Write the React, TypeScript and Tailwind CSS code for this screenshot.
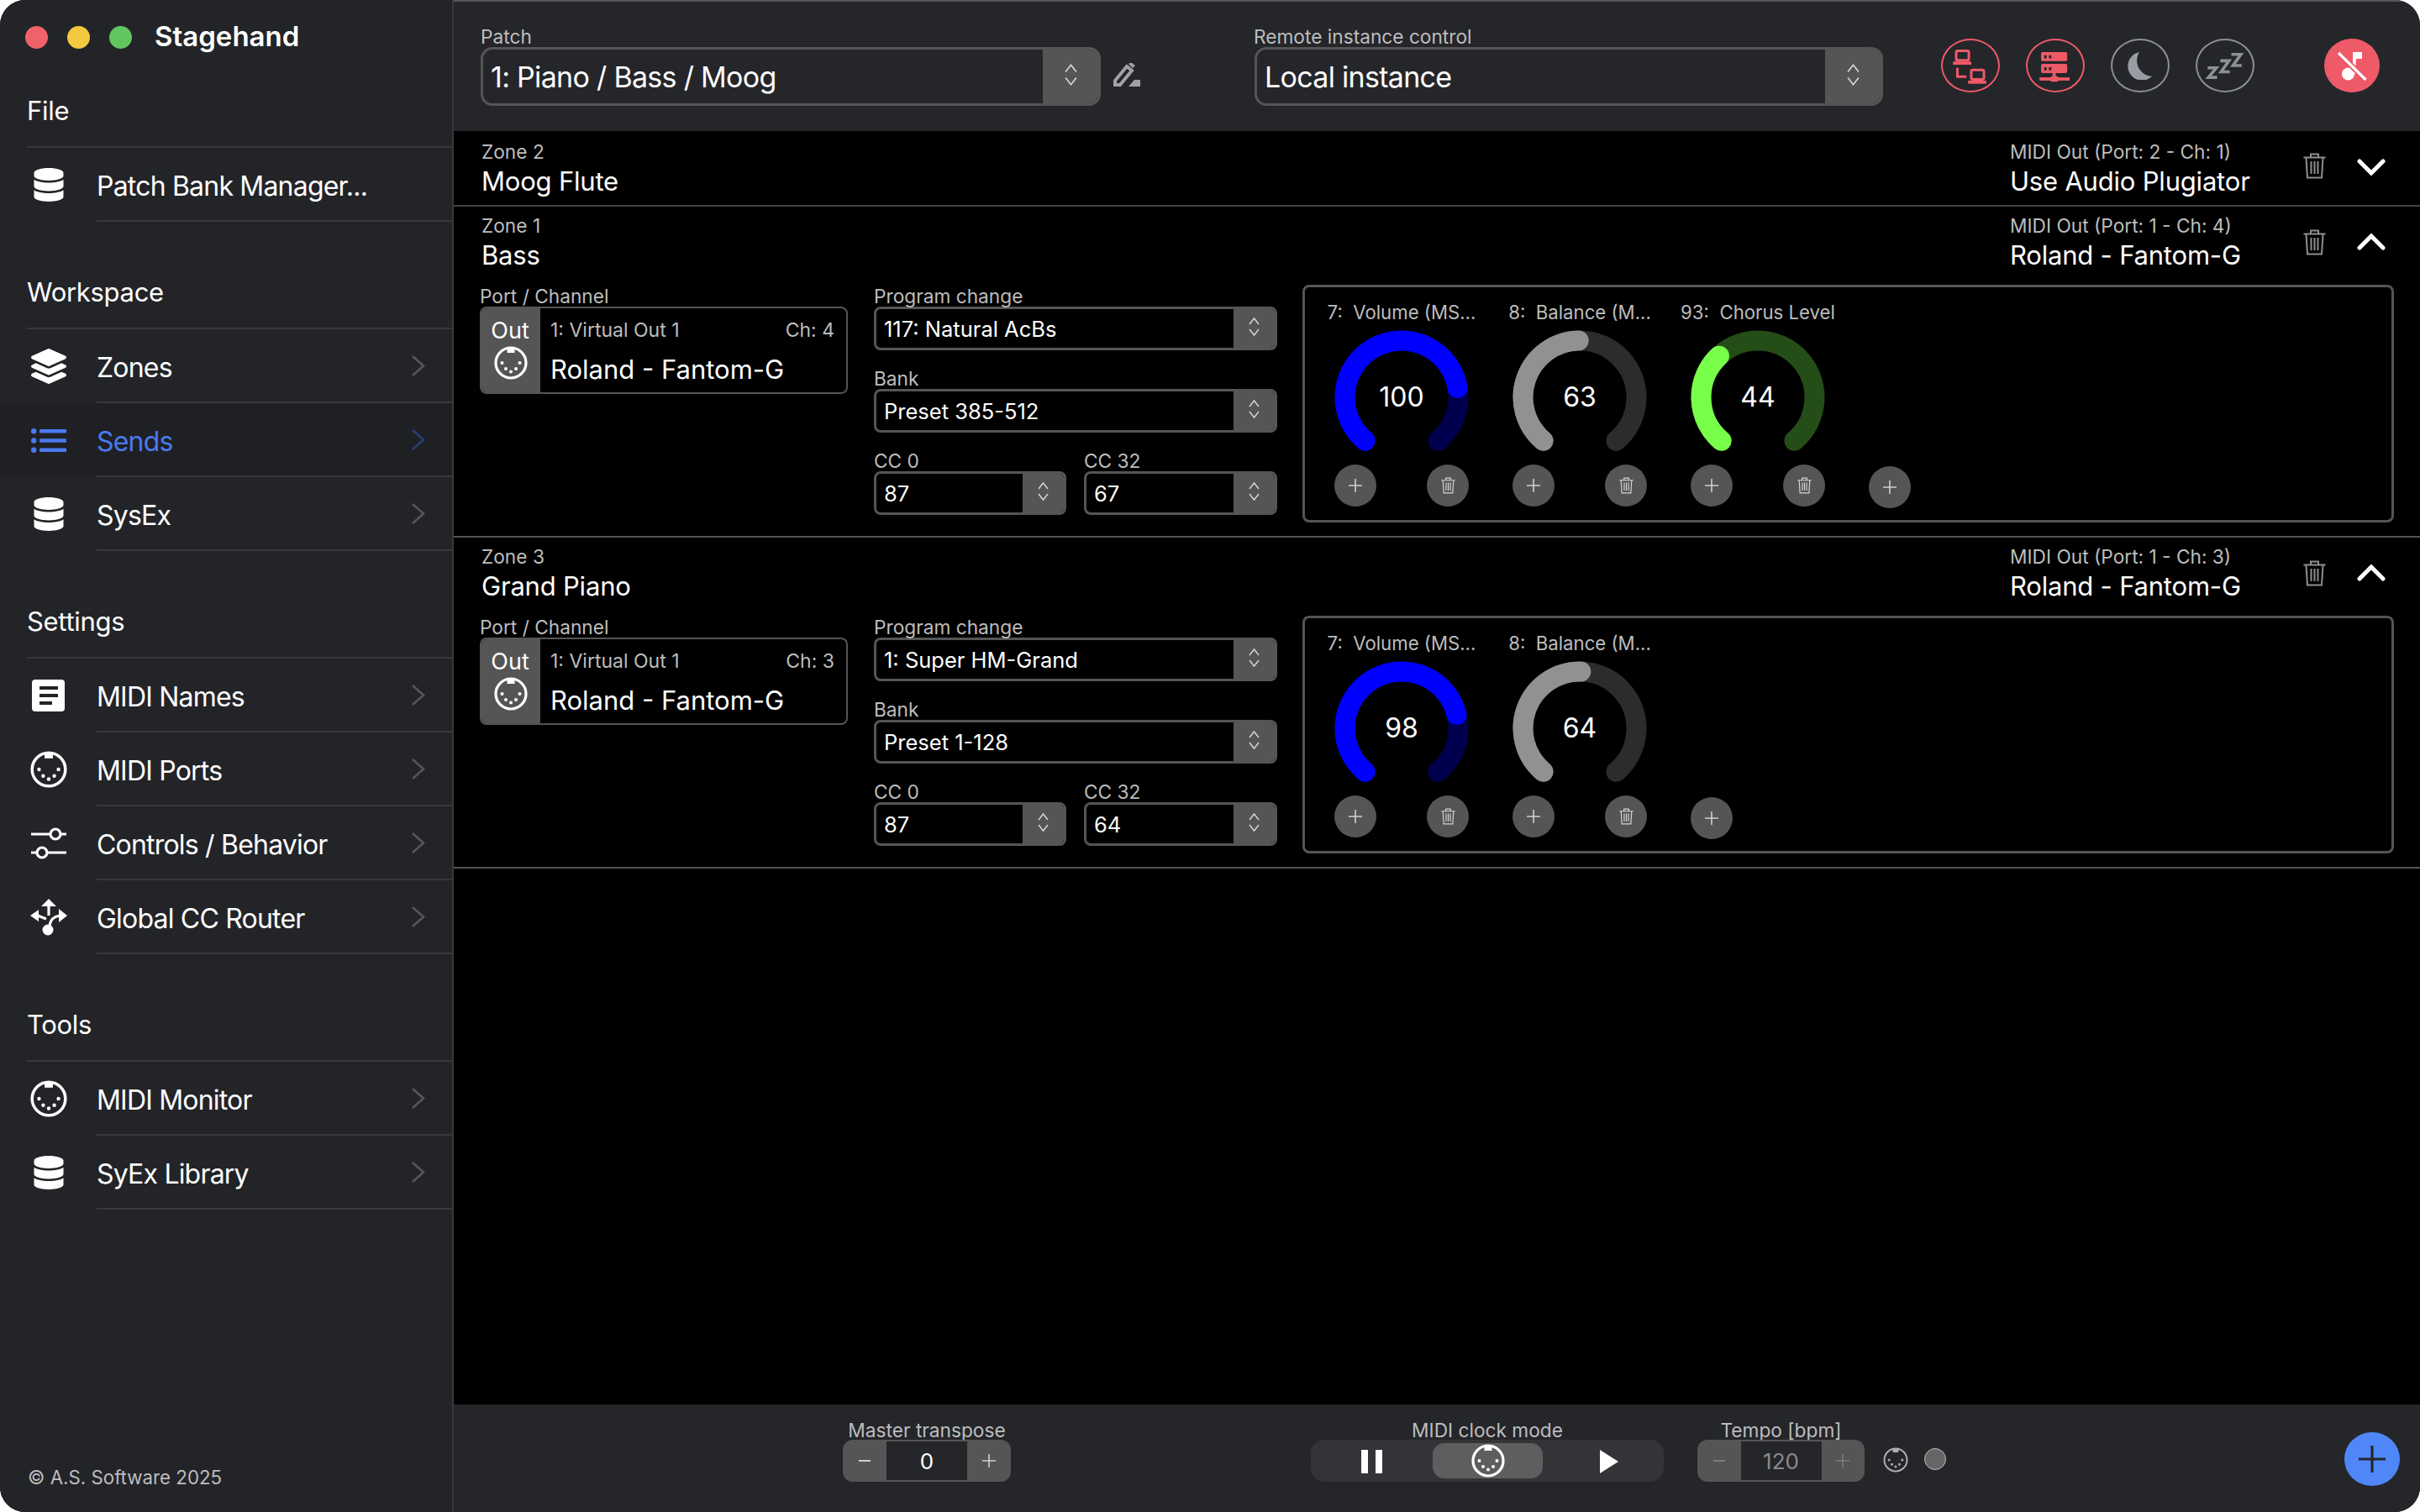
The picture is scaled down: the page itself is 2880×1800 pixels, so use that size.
import { FaDatabase, FaLayerGroup } from "react-icons/fa";

function MidiIcon({ size = 40, color = "#fff", sw = 3.2 }: { size?: number; color?: string; sw?: number }) {
  return (
    <svg width={size} height={size} viewBox="0 0 40 40" fill="none">
      <circle cx="20" cy="20" r="18" stroke={color} strokeWidth={sw} />
      <rect x="15.5" y="2" width="9" height="6" fill={color} />
      <g fill={color}>
        <circle cx="9.5" cy="20" r="2" />
        <circle cx="14" cy="27" r="2" />
        <circle cx="20" cy="30.5" r="2" />
        <circle cx="26" cy="27" r="2" />
        <circle cx="30.5" cy="20" r="2" />
      </g>
    </svg>
  );
}

function NamesIcon() {
  return (
    <svg width="39" height="38" viewBox="0 0 39 38">
      <rect width="39" height="38" rx="4" fill="#fff" />
      <rect x="9" y="8" width="22" height="4" fill="#232428" />
      <rect x="9" y="17" width="22" height="4" fill="#232428" />
      <rect x="9" y="26" width="15" height="4" fill="#232428" />
    </svg>
  );
}

function ListIcon() {
  return (
    <svg width="42" height="29" viewBox="0 0 42 29" fill="#4a7af0">
      <circle cx="3.2" cy="3.2" r="3.2" />
      <circle cx="3.2" cy="14.5" r="3.2" />
      <circle cx="3.2" cy="25.8" r="3.2" />
      <rect x="10" y="1" width="32" height="4.5" rx="1" />
      <rect x="10" y="12.2" width="32" height="4.5" rx="1" />
      <rect x="10" y="23.5" width="32" height="4.5" rx="1" />
    </svg>
  );
}

function SlidersIcon() {
  return (
    <svg width="44" height="38" viewBox="0 0 44 38" fill="none" stroke="#fff" strokeWidth="3.2">
      <path d="M1 8H24M36 8H43M1 30H8M20 30H43" />
      <circle cx="30" cy="8" r="6" />
      <circle cx="14" cy="30" r="6" />
    </svg>
  );
}

function RouterIcon() {
  return (
    <svg width="44" height="44" viewBox="0 0 44 44" fill="none">
      <circle cx="21" cy="37" r="6.5" fill="#fff" />
      <path d="M22 8V20M23 32C24 25 28 21 35 20M9 20L19 24" stroke="#fff" strokeWidth="3.2" />
      <path d="M22 0L31 9H13ZM44 20L34 12V28ZM0 20L10 13V27Z" fill="#fff" />
    </svg>
  );
}

function MoonIcon() {
  return (
    <svg width="32" height="33" viewBox="0 0 32 33" fill="#9a9ca3">
      <path d="M15 0A17 17 0 1 0 30 29A19 19 0 0 1 15 0Z" />
    </svg>
  );
}

function Chevron({ color = "#55565a" }: { color?: string }) {
  return (
    <svg width="17" height="27" viewBox="0 0 17 27" fill="none">
      <path d="M2 2L15 13.5L2 25" stroke={color} strokeWidth="2.6" />
    </svg>
  );
}

function UpDown({ w = 13, h = 24 }: { w?: number; h?: number }) {
  return (
    <svg width={w} height={h} viewBox="0 0 13 24" fill="none" stroke="#d8d8d8" strokeWidth="1.4">
      <path d="M1 9L6.5 2L12 9M1 15L6.5 22L12 15" />
    </svg>
  );
}

function Trash({ w = 27, h = 31, color = "#8e8e93", sw = 2 }: { w?: number; h?: number; color?: string; sw?: number }) {
  return (
    <svg width={w} height={h} viewBox="0 0 27 31" fill="none" stroke={color} strokeWidth={sw}>
      <path d="M0.5 5.5H26.5M9 5V1.5H18V5M3.5 6L5 29.5H22L23.5 6M9.5 10V25M13.5 10V25M17.5 10V25" />
    </svg>
  );
}

function UpDownChevron({ up }: { up: boolean }) {
  return (
    <svg width="34" height="20" viewBox="0 0 34 20" fill="none" stroke="#fff" strokeWidth="5" strokeLinecap="round">
      <path d={up ? "M3 17L17 3L31 17" : "M3 3L17 17L31 3"} />
    </svg>
  );
}

function Plus({ size = 16, color = "#d0d0d0", sw = 1.6 }: { size?: number; color?: string; sw?: number }) {
  return (
    <svg width={size} height={size} viewBox="0 0 16 16" fill="none" stroke={color} strokeWidth={sw}>
      <path d="M8 0V16M0 8H16" />
    </svg>
  );
}

function Row({ icon, label, chevron = true, active = false }: { icon: React.ReactNode; label: string; chevron?: boolean; active?: boolean }) {
  return (
    <div className={active ? "flex h-[88px] items-center bg-[#1f2024]" : "flex h-[88px] items-center"}>
      <div className="flex w-[115px] shrink-0 items-center justify-center">{icon}</div>
      <div className="flex h-full flex-1 items-center justify-between border-b-2 border-[#38393d] pr-[32px]">
        <span className={active ? "pt-[5px] text-[32px] tracking-[-0.8px] text-[#4a7af0]" : "pt-[5px] text-[32px] tracking-[-0.8px] text-white"}>{label}</span>
        {chevron && <Chevron color={active ? "#2a3f78" : "#55565a"} />}
      </div>
    </div>
  );
}

function Section({ title, children }: { title: string; children: React.ReactNode }) {
  return (
    <div className="mb-[40px]">
      <div className="ml-[32px] flex h-[88px] items-center border-b-2 border-[#38393d] pt-[3px] text-[31px] tracking-[-0.3px] text-white">{title}</div>
      {children}
    </div>
  );
}

function Sidebar() {
  const db = <FaDatabase size={40} color="#fff" />;
  return (
    <aside className="flex h-full w-[540px] shrink-0 flex-col border-r-2 border-[#38393d] bg-[#232428]">
      <div className="flex h-[88px] shrink-0 items-center pl-[30px]">
        <div className="h-[27px] w-[27px] rounded-full bg-[#f0626a]" />
        <div className="ml-[23px] h-[27px] w-[27px] rounded-full bg-[#f4c83f]" />
        <div className="ml-[23px] h-[27px] w-[27px] rounded-full bg-[#62c660]" />
        <span className="ml-[27px] text-[33px] font-semibold text-white">Stagehand</span>
      </div>
      <Section title="File">
        <Row icon={db} label="Patch Bank Manager..." chevron={false} />
      </Section>
      <Section title="Workspace">
        <Row icon={<FaLayerGroup size={42} color="#fff" />} label="Zones" />
        <Row icon={<ListIcon />} label="Sends" active />
        <Row icon={db} label="SysEx" />
      </Section>
      <Section title="Settings">
        <Row icon={<NamesIcon />} label="MIDI Names" />
        <Row icon={<MidiIcon size={44} />} label="MIDI Ports" />
        <Row icon={<SlidersIcon />} label="Controls / Behavior" />
        <Row icon={<RouterIcon />} label="Global CC Router" />
      </Section>
      <Section title="Tools">
        <Row icon={<MidiIcon size={44} />} label="MIDI Monitor" />
        <Row icon={db} label="SyEx Library" />
      </Section>
      <div className="mt-auto pb-[25px] pl-[33px] text-[22.3px] text-[#bdbdbd]">© A.S. Software 2025</div>
    </aside>
  );
}

function Select({ value, width, h = 52, btn = 49, big = false }: { value: string; width: number; h?: number; btn?: number; big?: boolean }) {
  return (
    <div
      className={big ? "flex overflow-hidden rounded-[14px] border-[3px] border-[#555]" : "flex overflow-hidden rounded-[8px] border-[3px] border-[#555]"}
      style={{ width, height: h }}
    >
      <div className={big ? "flex flex-1 items-center pl-[9px] text-[34px] tracking-[-0.7px] text-white" : "flex flex-1 items-center pl-[9px] pt-[2px] text-[25.5px] text-white"}>{value}</div>
      <div className="flex shrink-0 items-center justify-center bg-[#555] pb-[4px]" style={{ width: btn }}>
        {big ? <UpDown w={17} h={28} /> : <UpDown />}
      </div>
    </div>
  );
}

function CircleBtn({ color, children }: { color: string; children: React.ReactNode }) {
  return (
    <div className="flex h-[64px] w-[70px] items-center justify-center rounded-[50%] border-2" style={{ borderColor: color }}>
      {children}
    </div>
  );
}

function TopBar() {
  const red = "#ee5a68";
  const grey = "#8e9097";
  return (
    <header className="flex h-[156px] shrink-0 items-start border-t-2 border-[#56575b] bg-[#25262a] pl-[32px] pt-[30px]">
      <div>
        <div className="h-[24px] text-[22.7px] leading-[24px] text-[#bdbdbd]">Patch</div>
        <Select value="1: Piano / Bass / Moog" width={738} h={70} btn={66} big />
      </div>
      <svg className="ml-[15px] mt-[43px]" width="32" height="28" viewBox="0 0 32 28" fill="none">
        <path d="M2 21L16 4L22 9L8 26H2Z" stroke="#a0a2a8" strokeWidth="4" />
        <path d="M18 1L21 -1L26 3L23 6Z" fill="#a0a2a8" />
        <path d="M18 28L25 20H32V28Z" fill="#a0a2a8" />
      </svg>
      <div className="ml-[135px]">
        <div className="h-[24px] text-[22.7px] leading-[24px] text-[#bdbdbd]">Remote instance control</div>
        <div className="ml-[1px]">
          <Select value="Local instance" width={748} h={70} btn={66} big />
        </div>
      </div>
      <div className="ml-[69px] mt-[14px] flex gap-[31px]">
        <CircleBtn color={red}>
          <svg width="70" height="64" viewBox="0 0 70 64" fill="none">
            <rect x="17" y="13.5" width="16" height="12" rx="2" stroke={red} strokeWidth="3.2" />
            <rect x="13" y="27" width="23" height="4" fill={red} />
            <path d="M18.5 35V46H30" stroke={red} strokeWidth="3.2" />
            <rect x="36" y="37.5" width="16" height="12" rx="2" stroke={red} strokeWidth="3.2" />
            <rect x="32" y="51" width="23" height="4" fill={red} />
          </svg>
        </CircleBtn>
        <CircleBtn color={red}>
          <svg width="70" height="64" viewBox="0 0 70 64">
            <rect x="17" y="15" width="33" height="11.5" rx="2" fill={red} />
            <rect x="17" y="30" width="33" height="11.5" rx="2" fill={red} />
            <path d="M21 19h3v4h-3zM27 19h3v4h-3zM21 34h3v4h-3zM27 34h3v4h-3z" fill="#25262a" />
            <rect x="31.5" y="41" width="4" height="8" fill={red} />
            <rect x="15" y="47" width="38" height="4" fill={red} />
            <rect x="29" y="45.5" width="10" height="7" rx="2" fill={red} />
          </svg>
        </CircleBtn>
        <CircleBtn color={grey}>
          <MoonIcon />
        </CircleBtn>
        <CircleBtn color={grey}>
          <svg width="70" height="64" viewBox="0 0 70 64" fill="none" stroke="#8e9097" strokeWidth="3.8">
            <path d="M13 35H24L14 47H25M29 26H40L30 40H41M43 18H55L45 32H56" />
          </svg>
        </CircleBtn>
      </div>
      <div className="ml-[83px] mt-[14px] flex h-[64px] w-[66px] items-center justify-center rounded-[50%] bg-[#ee5a68]">
        <svg width="66" height="64" viewBox="0 0 66 64" fill="none">
          <circle cx="28.5" cy="42" r="7.5" fill="#fff" />
          <rect x="34" y="16" width="3.6" height="26" fill="#fff" />
          <path d="M34 16H45V24H37.6V28H34Z" fill="#fff" />
          <path d="M17 17L49.5 49" stroke="#ee5a68" strokeWidth="7" />
          <path d="M17 17L49.5 49" stroke="#fff" strokeWidth="3.2" />
        </svg>
      </div>
    </header>
  );
}

function polar(a: number) {
  const r = (a * Math.PI) / 180;
  return { x: 80 + 67.5 * Math.sin(r), y: 80 - 67.5 * Math.cos(r) };
}

function arc(a0: number, a1: number) {
  const p0 = polar(a0);
  const p1 = polar(a1);
  const large = a1 - a0 > 180 ? 1 : 0;
  return `M${p0.x} ${p0.y}A67.5 67.5 0 ${large} 1 ${p1.x} ${p1.y}`;
}

function Knob({ value, color, dim }: { value: number; color: string; dim: string }) {
  const end = -140 + (280 * value) / 127;
  return (
    <div className="relative mt-[8px] h-[160px] w-[160px]">
      <svg width="160" height="160" viewBox="0 0 160 160" fill="none" strokeWidth="24" strokeLinecap="round">
        <path d={arc(-140, 140)} stroke={dim} />
        <path d={arc(-140, end)} stroke={color} />
      </svg>
      <div className="absolute inset-0 flex items-center justify-center text-[32px] text-white">{value}</div>
    </div>
  );
}

function SmallRound({ children }: { children: React.ReactNode }) {
  return <div className="flex h-[50px] w-[50px] items-center justify-center rounded-full bg-[#555]">{children}</div>;
}

function CCGroup({ label, value, color, dim }: { label: string; value: number; color: string; dim: string }) {
  return (
    <div className="flex w-[212px] shrink-0 flex-col items-center">
      <div className="h-[26px] whitespace-pre text-[22.2px] leading-[26px] text-[#bdbdbd]">{label}</div>
      <Knob value={value} color={color} dim={dim} />
      <div className="flex gap-[60px]">
        <SmallRound>
          <Plus />
        </SmallRound>
        <SmallRound>
          <Trash w={17} h={28} color="#d8d8d8" sw={1.8} />
        </SmallRound>
      </div>
    </div>
  );
}

function ZoneHeader({ zone, name, out, device, open }: { zone: string; name: string; out: string; device: string; open: boolean }) {
  return (
    <div className="flex h-[86px] items-start pl-[33px] pt-[10px] pr-[34px]">
      <div>
        <div className="h-[26px] text-[22.7px] leading-[26px] text-[#bdbdbd]">{zone}</div>
        <div className="h-[42px] text-[31px] leading-[43px] tracking-[-0.2px] text-white">{name}</div>
      </div>
      <div className="ml-auto w-[340px]">
        <div className="h-[26px] text-[22.7px] leading-[26px] text-[#bdbdbd]">{out}</div>
        <div className="h-[42px] text-[31px] leading-[43px] tracking-[-0.2px] text-white">{device}</div>
      </div>
      <div className={open ? "mt-[17px] flex w-[44px] justify-center" : "mt-[14px] flex w-[44px] justify-center"}>
        <Trash />
      </div>
      <div className={open ? "ml-[22px] mt-[22px] flex w-[48px] justify-center" : "ml-[22px] mt-[21px] flex w-[48px] justify-center"}>
        <UpDownChevron up={open} />
      </div>
    </div>
  );
}

function Label({ children }: { children: React.ReactNode }) {
  return <div className="h-[26px] text-[22.7px] leading-[28px] text-[#bdbdbd]">{children}</div>;
}

type CC = { label: string; value: number; color: string; dim: string };

function ZoneBody({ port, ch, program, bank, cc0, cc32, ccs }: { port: string; ch: string; program: string; bank: string; cc0: string; cc32: string; ccs: CC[] }) {
  return (
    <div className="mt-[7px] flex items-start pb-[16px] pl-[31px]">
      <div className="w-[438px] shrink-0">
        <Label>Port / Channel</Label>
        <div className="flex h-[104px] overflow-hidden rounded-[8px] border-2 border-[#555]">
          <div className="flex w-[70px] shrink-0 flex-col items-center bg-[#555] pt-[9px]">
            <div className="pr-[2px] text-[27px] leading-[36px] text-white">Out</div>
            <MidiIcon size={40} />
          </div>
          <div className="flex-1 pl-[12px] pr-[14px]">
            <div className="flex h-[52px] items-center justify-between text-[23px] text-[#bdbdbd]">
              <span>{port}</span>
              <span>{ch}</span>
            </div>
            <div className="text-[31px] leading-[42px] text-white">Roland - Fantom-G</div>
          </div>
        </div>
      </div>
      <div className="ml-[31px] flex w-[480px] shrink-0 flex-col gap-[20px]">
        <div>
          <Label>Program change</Label>
          <Select value={program} width={480} />
        </div>
        <div>
          <Label>Bank</Label>
          <Select value={bank} width={480} />
        </div>
        <div className="flex gap-[21px]">
          <div>
            <Label>CC 0</Label>
            <Select value={cc0} width={229} />
          </div>
          <div>
            <Label>CC 32</Label>
            <Select value={cc32} width={230} />
          </div>
        </div>
      </div>
      <div className="ml-[30px] flex h-[283px] w-[1299px] items-start rounded-[8px] border-[3px] border-[#555] pl-[9px] pt-[17px]">
        {ccs.map((c) => (
          <CCGroup key={c.label} {...c} />
        ))}
        <div className="ml-[26px] mt-[196px]">
          <SmallRound>
            <Plus />
          </SmallRound>
        </div>
      </div>
    </div>
  );
}

function Stepper({ value, dim = false, w, input }: { value: string; dim?: boolean; w: number; input: number }) {
  return (
    <div className="flex h-[50px] items-center justify-between rounded-[12px] bg-[#555]" style={{ width: w }}>
      <div className="flex flex-1 justify-center">
        <div className={dim ? "h-[2px] w-[14px] bg-[#7e7e7e]" : "h-[2px] w-[14px] bg-[#cfcfcf]"} />
      </div>
      <div className={dim ? "flex h-[46px] items-center justify-center bg-[#25262a] text-[26px] text-[#8a8a8a]" : "flex h-[46px] items-center justify-center bg-[#25262a] text-[26px] text-white"} style={{ width: input }}>
        {value}
      </div>
      <div className="flex flex-1 justify-center">
        <Plus size={16} color={dim ? "#7e7e7e" : "#cfcfcf"} />
      </div>
    </div>
  );
}

function BottomBar() {
  return (
    <footer className="flex h-[128px] shrink-0 items-start bg-[#25262a] pl-[463px] pt-[19px]">
      <div className="flex flex-col items-center">
        <div className="h-[23px] text-[22.7px] leading-[24px] text-[#bdbdbd]">Master transpose</div>
        <Stepper value="0" w={200} input={96} />
      </div>
      <div className="ml-[357px] flex w-[420px] flex-col items-center">
        <div className="h-[23px] text-[22.7px] leading-[24px] text-[#bdbdbd]">MIDI clock mode</div>
        <div className="flex h-[50px] w-full items-center rounded-[16px] bg-[#333438]">
          <div className="flex w-[145px] justify-center gap-[9px] pt-[2px]">
            <div className="h-[28px] w-[8px] bg-white" />
            <div className="h-[28px] w-[8px] bg-white" />
          </div>
          <div className="flex h-[42px] w-[131px] items-center justify-center rounded-[14px] bg-[#5e5e5e]">
            <MidiIcon size={40} />
          </div>
          <div className="flex flex-1 justify-center pl-[14px] pt-[2px]">
            <div className="h-0 w-0 border-y-[14px] border-l-[22px] border-y-transparent border-l-white" />
          </div>
        </div>
      </div>
      <div className="ml-[40px] flex flex-col items-center">
        <div className="h-[23px] text-[22.7px] leading-[24px] text-[#bdbdbd]">Tempo [bpm]</div>
        <Stepper value="120" dim w={199} input={96} />
      </div>
      <div className="ml-[22px] mt-[32px]">
        <MidiIcon size={30} color="#b0b0b0" sw={2.6} />
      </div>
      <div className="ml-[19px] mt-[33px] h-[26px] w-[26px] rounded-full border border-[#bbb] bg-[#666]" />
      <div className="ml-[474px] mt-[14px] flex h-[64px] w-[66px] items-center justify-center rounded-[50%] bg-[#5087f8]">
        <Plus size={32} color="#25262a" sw={1.6} />
      </div>
    </footer>
  );
}

export default function App() {
  const blue = { color: "#0000ff", dim: "#00004f" };
  const grey = { color: "#919191", dim: "#2c2c2c" };
  return (
    <div className="h-[1800px] w-[2880px] bg-white [font-family:Inter,'Noto_Sans',sans-serif] antialiased">
      <div className="flex h-full overflow-hidden rounded-[30px] bg-black">
        <Sidebar />
        <main className="flex min-w-0 flex-1 flex-col">
          <TopBar />
          <div className="flex-1 pt-[2px]">
            <div className="border-b-2 border-[#444]">
              <ZoneHeader zone="Zone 2" name="Moog Flute" out="MIDI Out (Port: 2 - Ch: 1)" device="Use Audio Plugiator" open={false} />
            </div>
            <div className="border-b-2 border-[#555]">
              <ZoneHeader zone="Zone 1" name="Bass" out="MIDI Out (Port: 1 - Ch: 4)" device="Roland - Fantom-G" open />
              <ZoneBody
                port="1: Virtual Out 1"
                ch="Ch: 4"
                program="117: Natural AcBs"
                bank="Preset 385-512"
                cc0="87"
                cc32="67"
                ccs={[
                  { label: "7:  Volume (MS...", value: 100, ...blue },
                  { label: "8:  Balance (M...", value: 63, ...grey },
                  { label: "93:  Chorus Level", value: 44, color: "#78ff4a", dim: "#254d17" },
                ]}
              />
            </div>
            <div className="border-b-2 border-[#555]">
              <ZoneHeader zone="Zone 3" name="Grand Piano" out="MIDI Out (Port: 1 - Ch: 3)" device="Roland - Fantom-G" open />
              <ZoneBody
                port="1: Virtual Out 1"
                ch="Ch: 3"
                program="1: Super HM-Grand"
                bank="Preset 1-128"
                cc0="87"
                cc32="64"
                ccs={[
                  { label: "7:  Volume (MS...", value: 98, ...blue },
                  { label: "8:  Balance (M...", value: 64, ...grey },
                ]}
              />
            </div>
          </div>
          <BottomBar />
        </main>
      </div>
    </div>
  );
}
